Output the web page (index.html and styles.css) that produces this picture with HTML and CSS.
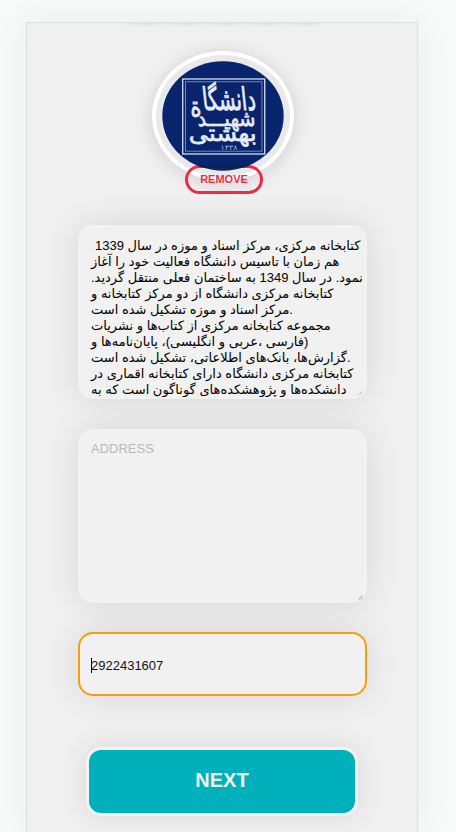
FILE: index.html
```html
<!DOCTYPE html>
<html lang="en">
<head>
<meta charset="utf-8">
<title>Library profile</title>
<link rel="stylesheet" href="styles.css">
</head>
<body>
<main class="card">
  <div class="smudge"></div>
  <section class="avatar">
    <div class="ring"></div>
    <button class="remove" type="button">REMOVE</button>
    <svg class="logo" viewBox="0 0 122 110">
      <defs><clipPath id="oval"><ellipse cx="61" cy="55" rx="60.7" ry="54.7"/></clipPath></defs>
      <ellipse cx="61" cy="55" rx="60.7" ry="54.7" fill="#08246c"/>
      <rect x="20.7" y="18" width="82" height="75" fill="none" stroke="#c8d1e4" stroke-width="1.4"/>
      <rect x="23.5" y="20.8" width="76.4" height="69.4" fill="none" stroke="#7f90b9" stroke-width=".9"/>
      <g class="script" direction="rtl" text-anchor="middle">
        <text transform="translate(68 49) skewX(6) scale(1 1.5)" font-size="21" textLength="53" lengthAdjust="spacingAndGlyphs">دانشگا</text>
        <text transform="translate(34 55) scale(1 1.3)" font-size="21">ة</text>
        <text transform="translate(65 65) skewX(6) scale(1 1.1)" font-size="20" textLength="58" lengthAdjust="spacingAndGlyphs">شهیـــد</text>
        <text transform="translate(61 80) skewX(6) scale(1 1.15)" font-size="20" textLength="68" lengthAdjust="spacingAndGlyphs">بهشتی</text>
        <text x="67" y="89" font-size="7" textLength="17" lengthAdjust="spacingAndGlyphs" class="year">۱۳۳۸</text>
      </g>
      <rect x="29" y="104" width="64" height="2.6" fill="#08233c" clip-path="url(#oval)"/>
    </svg>
  </section>
  <div class="field area story" dir="rtl">
    <p class="indent">کتابخانه مرکزی، مرکز اسناد و موزه در سال 1339</p>
    <p>هم زمان با تاسیس دانشگاه فعالیت خود را آغاز</p>
    <p>نمود. در سال 1349 به ساختمان فعلی منتقل گردید.</p>
    <p>کتابخانه مرکزی دانشگاه از دو مرکز کتابخانه و</p>
    <p>.مرکز اسناد و موزه تشکیل شده است</p>
    <p>مجموعه کتابخانه مرکزی از کتاب‌ها و نشریات</p>
    <p>(فارسی ،عربی و انگلیسی)، پایان‌نامه‌ها و</p>
    <p>.گزارش‌ها، بانک‌های اطلاعاتی، تشکیل شده است</p>
    <p>کتابخانه مرکزی دانشگاه دارای کتابخانه اقماری در</p>
    <p>دانشکده‌ها و پژوهشکده‌های گوناگون است که به</p>
    <svg class="grip" viewBox="0 0 5 5"><path d="M0.5 4.5L4.5 .5M3 4.5L4.5 3"/></svg>
  </div>
  <div class="field area address">ADDRESS
    <svg class="grip" viewBox="0 0 5 5"><path d="M0.5 4.5L4.5 .5M3 4.5L4.5 3"/></svg>
  </div>
  <div class="field phone"><span class="caret"></span>2922431607</div>
  <button class="next" type="button">NEXT</button>
</main>
</body>
</html>
```
FILE: styles.css
```css
* { box-sizing: border-box; }
body {
  margin: 0;
  height: 832px;
  overflow: hidden;
  padding: 22px 38px 0 26px;
  background: #f8fafa;
  font-family: "Liberation Sans", "DejaVu Sans", sans-serif;
}
.card {
  position: relative;
  height: 810px;
  padding: 28px 50px 0 51px;
  border: 1px solid #dde0df;
  border-bottom: 0;
  background: #f0f0f0;
  box-shadow: 0 0 38px rgba(0, 30, 20, .055);
}
.smudge {
  position: absolute;
  top: 0;
  left: 97px;
  width: 196px;
  height: 4px;
  background: linear-gradient(#e0e0e0, #f0f0f0);
  -webkit-mask: repeating-linear-gradient(90deg, #0008 0 5px, #000 18px 26px, #0006 40px);
}
.avatar {
  position: relative;
  width: 142px;
  height: 143px;
  margin: 0 0 0 74px;
}
.ring {
  width: 142px;
  height: 130px;
  border: 4px solid #fff;
  border-radius: 50%;
  background: #e9e9e9;
  box-shadow: 0 2px 18px rgba(0, 0, 0, .14);
}
.remove {
  position: absolute;
  left: 33px;
  top: 114px;
  width: 78px;
  height: 29px;
  padding: 0 0 2px;
  border: 3px solid #ee2b47;
  border-radius: 15px;
  background: none;
  color: #ee2b47;
  font: bold 11px "Liberation Sans", sans-serif;
}
.logo {
  position: absolute;
  left: 10px;
  top: 10px;
  width: 122px;
  height: 110px;
}
.script {
  fill: #e8ecf4;
  stroke: #e8ecf4;
  stroke-width: .6;
  font-family: "DejaVu Sans", sans-serif;
}
.year { stroke: none; fill: #a9b5d0; }
.field {
  position: relative;
  width: 289px;
  border: 2px solid #f2f2f2;
  border-radius: 15px;
  background: #f1f1f1;
  box-shadow: 0 0 34px rgba(0, 0, 0, .11);
  font-size: 13px;
}
.area {
  height: 174px;
  margin-top: 30px;
  padding: 10px 2px 0 11px;
}
.story {
  padding-top: 11px;
  margin-top: 31px;
  overflow: hidden;
  text-align: left;
  line-height: 16px;
}
.story p {
  margin: 0;
  white-space: nowrap;
}
.story .indent { padding-left: 4px; }
.address { color: #b9b9b9; }
.grip {
  position: absolute;
  right: 2px;
  bottom: 1px;
  width: 5px;
  height: 5px;
  fill: none;
  stroke: #777;
  stroke-width: .7;
}
.phone {
  display: flex;
  align-items: center;
  height: 64px;
  margin-top: 29px;
  padding: 2px 0 0 11px;
  border-color: #f29f0d;
  color: #111;
}
.caret {
  width: 1px;
  height: 15px;
  margin-right: -1px;
  background: #000;
}
.next {
  display: block;
  width: 272px;
  height: 69px;
  margin: 51px 0 0 8px;
  padding: 0 0 2px 0;
  border: 3px solid #f4f4f4;
  border-radius: 15px;
  background: #00b1bb;
  box-shadow: 0 0 28px rgba(0, 0, 0, .1);
  color: #f0f0f0;
  font: bold 20px "Liberation Sans", sans-serif;
}
```
